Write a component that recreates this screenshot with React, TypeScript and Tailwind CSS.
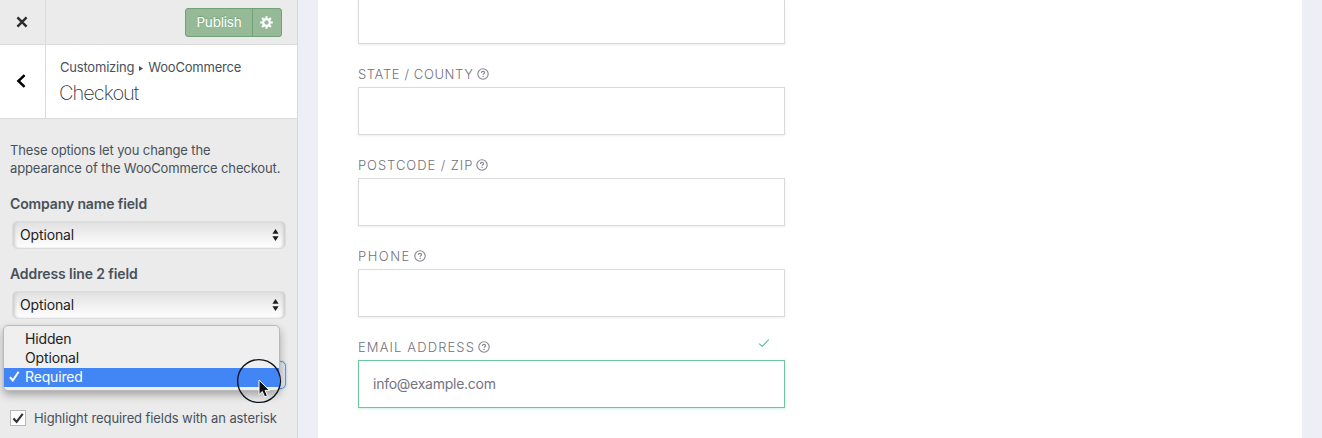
import React from "react";

function HelpIcon() {
  return (
    <svg className="h-3 w-3 shrink-0" viewBox="0 0 12 12" fill="none" stroke="#85848f">
      <circle cx="6" cy="6" r="5.2" strokeWidth="1.1" />
      <path d="M4.4 4.9c0-1 .7-1.5 1.6-1.5s1.6.5 1.6 1.3c0 1-1.5 1.1-1.5 2.1" strokeWidth="1.1" />
      <path d="M6.05 7.8v1.1" strokeWidth="1.2" />
    </svg>
  );
}

type FieldProps = {
  label: string;
  tracking: string;
  value?: string;
  valid?: boolean;
};

function Field({ label, tracking, value, valid }: FieldProps) {
  return (
    <div className="flex h-[91px] shrink-0 flex-col">
      <div className="flex h-[43px] items-center pt-[17px]">
        <span className={`whitespace-nowrap font-['Inter',sans-serif] text-[13px] font-light leading-none text-[#72717d] ${tracking}`}>
          {label}
        </span>
        <span className="ml-[3px]">
          <HelpIcon />
        </span>
        {valid && (
          <svg className="mb-[9px] ml-auto mr-[15px] h-3 w-3" viewBox="0 0 12 12" fill="none" stroke="#5fc394" strokeWidth="1.2">
            <path d="M1.2 6.6 4.2 9.4 10.8 2.6" />
          </svg>
        )}
      </div>
      <div
        className={`flex h-12 items-center border pb-0.5 pl-[14px] font-['Inter',sans-serif] text-[14px] text-[#74747f] ${
          valid
            ? "border-[#70c69b] shadow-[0_1px_2px_#c9f4df]"
            : "border-[#d9d9de] shadow-[0_1px_2px_#ececef]"
        }`}
      >
        <span className="tracking-[-0.25px]">{value}</span>
      </div>
    </div>
  );
}

function Select({ value }: { value: string }) {
  return (
    <div className="ml-[2px] flex h-7 w-[274px] items-center justify-between rounded-[5px] border border-[#dcdcdc] bg-linear-to-b from-[#e1e1e1] to-white pb-px pl-[7px] pr-[6px] shadow-[inset_3px_0_3px_-1px_#cfcfcf,inset_-3px_0_3px_-1px_#cfcfcf]">
      <span className="text-[14px] tracking-[-0.15px] text-[#1d1d1f]">{value}</span>
      <svg className="h-3 w-[7px]" viewBox="0 0 7 12" fill="#1d1d1f">
        <path d="M3.5 0 6.6 4.8H.4zM3.5 12 .4 7.2h6.2z" />
      </svg>
    </div>
  );
}

function Menu() {
  return (
    <div className="absolute left-[3px] top-[325px] flex h-[66px] w-[277px] flex-col rounded-[5px] border border-[#b9b9b9] bg-[#efefef] pt-[5px] font-['Inter',sans-serif] text-[14px] leading-[18px] tracking-[-0.15px] text-[#222] shadow-[0_4px_9px_rgba(0,0,0,0.3)]">
      <div className="h-[18px] pl-[21px] leading-[16px]">Hidden</div>
      <div className="h-[19px] pl-[21px]">Optional</div>
      <div className="flex h-[19px] bg-[#4285f4] pl-[5px] text-white">
        <svg className="mr-[5px] mt-[3px] h-[11px] w-[11px]" viewBox="0 0 11 11" fill="none" stroke="white" strokeWidth="2">
          <path d="M1 6.2 3.8 9.5 9.6.8" />
        </svg>
        <span>Required</span>
      </div>
    </div>
  );
}

function Pointer() {
  return (
    <svg className="absolute left-[236px] top-[358px] h-[46px] w-[46px]" viewBox="0 0 46 46">
      <circle cx="23" cy="23" r="21.4" fill="none" stroke="#10131c" strokeWidth="1.4" />
      <path
        d="M23 22v14.6l3.3-3.1 2.4 5.4 2.7-1.2-2.3-5.3h4.4z"
        fill="#111"
        stroke="white"
        strokeWidth="1"
      />
    </svg>
  );
}

function Sidebar() {
  return (
    <aside className="flex w-[298px] shrink-0 flex-col border-r border-[#d9d9dc] bg-[#ebebeb] font-['Inter',sans-serif] text-[#48515a]">
      <div className="flex h-[45px] shrink-0 border-b border-[#dadada]">
        <div className="flex w-[46px] items-center justify-center border-r border-[#dadada]">
          <svg className="ml-[-1px] h-3 w-3" viewBox="0 0 12 12" stroke="#2b2b2b" strokeWidth="2.4">
            <path d="m1.4 1.4 9.2 9.2M10.6 1.4l-9.2 9.2" />
          </svg>
        </div>
        <div className="flex flex-1 items-center justify-end pr-[15px]">
          <div className="flex h-[29px] w-[97px] rounded-[3px] border border-[#72a077] bg-[#96b998] text-white">
            <div className="flex w-[67px] items-center justify-center border-r border-[#72a077] text-[13.5px] tracking-[-0.2px] [text-shadow:0_-1px_1px_#72a077]">
              Publish
            </div>
            <div className="flex flex-1 items-center justify-center">
              <svg className="mr-px h-[13px] w-[13px]" viewBox="0 0 12 12" fill="none" stroke="white">
                <circle cx="6" cy="6" r="3.1" strokeWidth="2.1" />
                <path
                  d="M6 .2v2M6 9.8v2M.2 6h2M9.8 6h2M1.9 1.9l1.4 1.4M8.7 8.7l1.4 1.4M10.1 1.9 8.7 3.3M3.3 8.7l-1.4 1.4"
                  strokeWidth="1.9"
                />
              </svg>
            </div>
          </div>
        </div>
      </div>
      <div className="flex h-[74px] shrink-0 border-b border-[#dadada] bg-white">
        <div className="flex w-[46px] items-center justify-center border-r border-[#dadada] pb-0.5">
          <svg className="ml-[-4px] h-[14px] w-2.5" viewBox="0 0 10 14" fill="none" stroke="black" strokeWidth="2.5">
            <path d="M8.6 1.2 2.4 7l6.2 5.8" />
          </svg>
        </div>
        <div className="flex flex-1 flex-col pl-[14px] pt-[13px]">
          <div className="flex h-5 items-center whitespace-nowrap text-[13px] tracking-[-0.2px]">
            Customizing
            <svg className="mx-[5px] h-[5px] w-1" viewBox="0 0 4 5" fill="#48515a">
              <path d="M0 0v5l4-2.5z" />
            </svg>
            WooCommerce
          </div>
          <div className="ml-[-1px] h-[30px] text-[20px] font-extralight leading-[30px] tracking-[-1px] text-[#30363c]">Checkout</div>
        </div>
      </div>
      <div className="flex flex-col pl-[10px] pt-[22px]">
        <p className="whitespace-nowrap text-[13px] leading-[18px] tracking-[-0.13px]">
          These options let you change the
          <br />
          appearance of the WooCommerce checkout.
        </p>
        <div className="mb-[7px] mt-[17px] h-5 text-[14px] font-semibold leading-5 tracking-[-0.13px]">Company name field</div>
        <Select value="Optional" />
        <div className="mb-[7px] mt-[15px] h-5 text-[14px] font-semibold leading-5 tracking-[-0.1px]">Address line 2 field</div>
        <Select value="Optional" />
        <div className="ml-[2px] mt-[42px] h-7 w-[274px] rounded-[5px] border border-[#5b9dd9] bg-[#e2e6eb] shadow-[0_0_2px_#8fbce6]" />
        <div className="mt-[21px] flex h-4 items-center">
          <div className="flex h-4 w-4 items-center justify-center border border-[#b4b9be] bg-white">
            <svg className="h-3 w-3" viewBox="0 0 12 12" fill="none" stroke="#30343a" strokeWidth="2.2">
              <path d="M1.4 6.4 4.6 9.8 10.7 1.8" />
            </svg>
          </div>
          <span className="ml-[8px] whitespace-nowrap pt-0.5 text-[13px] tracking-[-0.09px]">
            Highlight required fields with an asterisk
          </span>
        </div>
      </div>
    </aside>
  );
}

export default function App() {
  return (
    <div className="relative flex h-[438px] w-[1322px] overflow-hidden bg-[#eeeef7]">
      <Sidebar />
      <main className="ml-5 flex h-full w-[984px] flex-col bg-white pl-10">
        <div className="flex w-[427px] flex-col">
          <div className="h-11 border border-t-0 border-[#d9d9de] shadow-[0_1px_2px_#ececef]" />
          <Field label="STATE / COUNTY" tracking="tracking-[0.62px]" />
          <Field label="POSTCODE / ZIP" tracking="tracking-[0.95px]" />
          <Field label="PHONE" tracking="tracking-[1.5px]" />
          <Field label="EMAIL ADDRESS" tracking="tracking-[1.12px]" value="info@example.com" valid />
        </div>
      </main>
      <Menu />
      <Pointer />
    </div>
  );
}
